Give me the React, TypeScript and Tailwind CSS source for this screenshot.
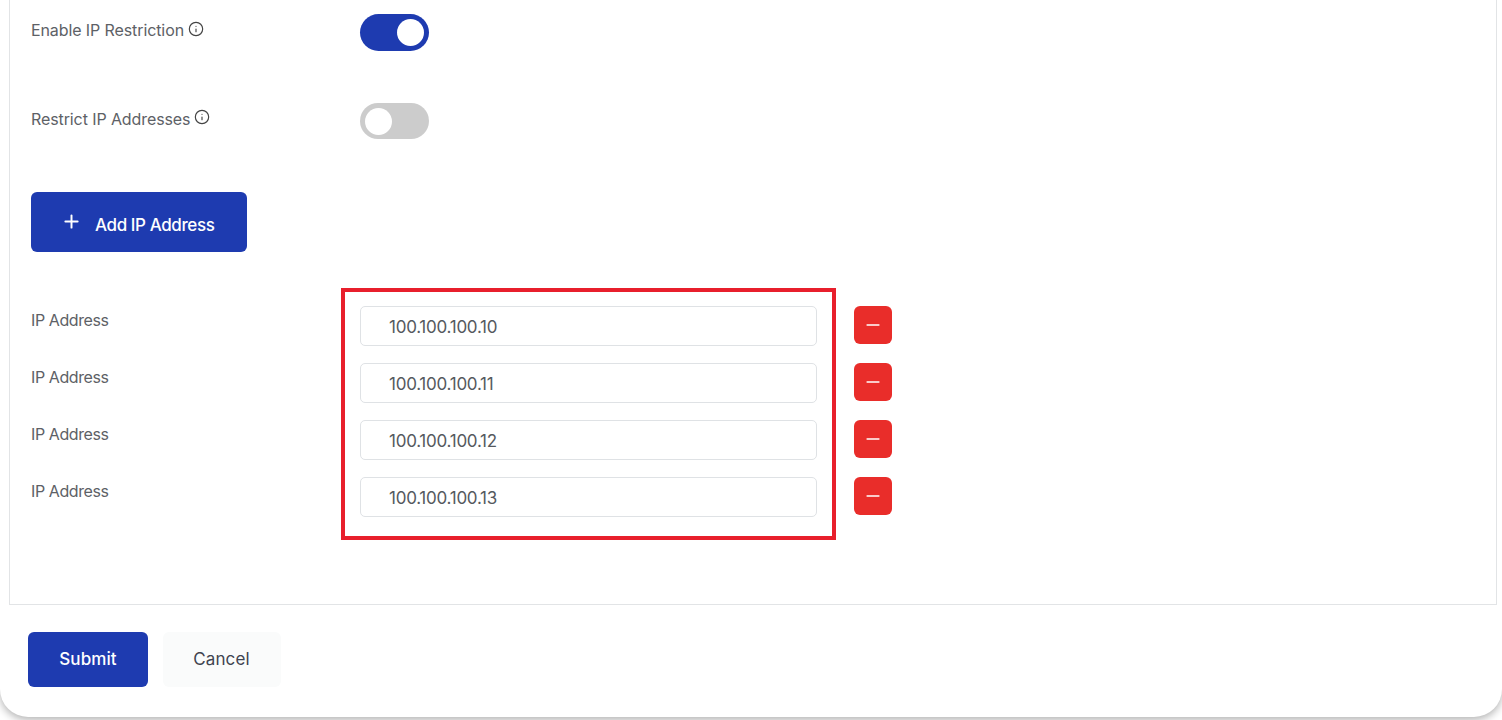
import { Plus, Minus, Info } from "lucide-react";

const ips = ["100.100.100.10", "100.100.100.11", "100.100.100.12", "100.100.100.13"];

const Toggle = ({ on }: { on: boolean }) => (
  <div
    className={`flex w-[69px] items-center rounded-full px-[5px] ${
      on ? "h-[37px] justify-end bg-[#1e3bb0]" : "h-[36px] justify-start bg-[#cccccc]"
    }`}
  >
    <div className="size-[27px] rounded-full bg-white" />
  </div>
);

const SwitchRow = ({ label, on, className }: { label: string; on: boolean; className: string }) => (
  <div className={`flex ${className}`}>
    <div className="flex w-[329px] items-start gap-[4px] pt-[6px] text-[16px] leading-[20px] tracking-[-0.1px] text-[#5d6166]">
      <span>{label}</span>
      <Info className={`size-[16px] text-[#444] ${on ? "mt-px" : ""}`} strokeWidth={1.75} />
    </div>
    <Toggle on={on} />
  </div>
);

export default function App() {
  return (
    <div className="h-[720px] w-[1502px] overflow-hidden bg-white font-['Inter','Liberation_Sans',sans-serif]">
      <div className="flex h-[717px] flex-col rounded-b-[28px] bg-white shadow-[0_3px_8px_rgba(0,0,0,0.3)]">
        <div className="ml-[9px] mr-[5px] flex h-[605px] flex-col border-x border-b border-[#e2e4e6] pl-[21px]">
          <SwitchRow label="Enable IP Restriction" on className="mt-[14px]" />
          <SwitchRow label="Restrict IP Addresses" on={false} className="mt-[52px]" />

          <button className="mt-[53px] flex h-[60px] w-[216px] items-center rounded-[6px] bg-[#1e3bb0] pl-[30px] text-[17px] font-medium tracking-[-0.4px] text-white">
            <Plus className="mb-[2px] size-[21px]" strokeWidth={2.25} />
            <span className="ml-[13px] mt-[7px]">Add IP Address</span>
          </button>

          <div className="mt-[36px] flex">
            <div className="flex w-[310px] flex-col gap-[37px] pt-[22px] text-[16px] leading-[20px] tracking-[-0.4px] text-[#5d6166]">
              {ips.map((ip) => (
                <span key={ip}>IP Address</span>
              ))}
            </div>
            <div className="flex h-[252px] w-[495px] flex-col gap-[17px] border-4 border-[#e81f2c] px-[15px] pt-[14px]">
              {ips.map((ip) => (
                <div
                  key={ip}
                  className="flex h-[40px] items-center rounded-[5px] border border-[#dfe2e5] pl-[28px] pt-[3px] text-[17px] tracking-[-0.25px] text-[#55595e]"
                >
                  {ip}
                </div>
              ))}
            </div>
            <div className="ml-[18px] flex flex-col gap-[19px] pt-[18px]">
              {ips.map((ip) => (
                <button key={ip} className="flex size-[38px] items-center justify-center rounded-[6px] bg-[#e92d2a] text-white">
                  <Minus className="size-[20px]" strokeWidth={2} />
                </button>
              ))}
            </div>
          </div>
        </div>

        <div className="ml-[28px] mt-[27px] flex gap-[15px]">
          <button className="h-[55px] w-[120px] rounded-[6px] bg-[#1e3bb0] text-[17px] font-medium tracking-[0.1px] text-white">
            Submit
          </button>
          <button className="h-[55px] w-[118px] rounded-[6px] bg-[#fafbfb] pr-[1px] text-[17px] tracking-[0.1px] text-[#3f4450]">
            Cancel
          </button>
        </div>
      </div>
    </div>
  );
}
